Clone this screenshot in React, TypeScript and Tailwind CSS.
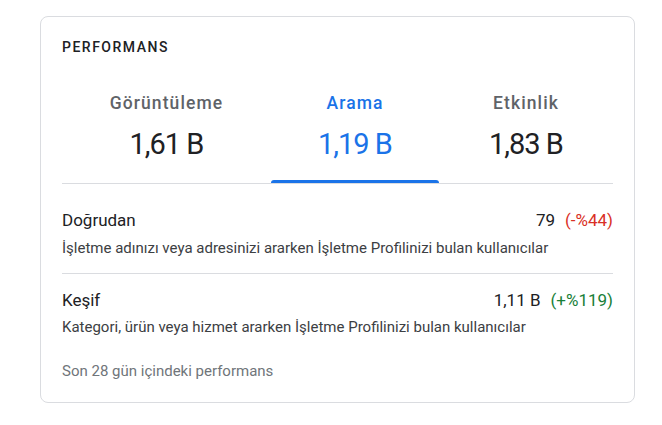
import React from "react";

const font = { fontFamily: "Roboto, 'Noto Sans', Arial, sans-serif" };

function Tab({ label, value, active, className }: { label: string; value: string; active?: boolean; className: string }) {
  return (
    <div className={`relative flex flex-col items-center pb-[21px] ${className}`}>
      <div className={`text-[17.5px] leading-[24px] font-medium tracking-[1.1px] ${active ? "text-[#1a73e8]" : "text-[#5f6368]"}`}>{label}</div>
      <div className={`mt-[11px] text-[29px] leading-[36px] tracking-[-1px] ${active ? "text-[#1a73e8]" : "text-[#202124]"}`}>{value}</div>
      {active && <div className="absolute bottom-0 left-0 right-0 h-[3px] rounded-t-[3px] bg-[#1a73e8]" />}
    </div>
  );
}

export default function App() {
  return (
    <div className="w-[662px] h-[425px] bg-white pt-4 pl-10" style={font}>
      <div className="w-[595px] h-[387px] border border-[#dadce0] rounded-lg px-[21px] pt-[20px]">
        <div className="text-[14px] leading-[20px] font-medium tracking-[1.5px] text-[#202124]">PERFORMANS</div>
        <div className="mt-[34px] flex border-b border-[#dadce0]">
          <Tab label="Görüntüleme" value="1,61 B" className="w-[209px]" />
          <Tab label="Arama" value="1,19 B" active className="w-[168px]" />
          <Tab label="Etkinlik" value="1,83 B" className="flex-1" />
        </div>
        <div className="pt-[24px] pb-[15px] border-b border-[#dadce0]">
          <div className="flex justify-between text-[17px] leading-[24px]">
            <span className="text-[#202124]">Doğrudan</span>
            <span className="text-[#202124]">79<span className="ml-[10px] text-[#d93025]">(-%44)</span></span>
          </div>
          <div className="mt-[6px] text-[15px] leading-[20px] text-[#3c4043]">İşletme adınızı veya adresinizi ararken İşletme Profilinizi bulan kullanıcılar</div>
        </div>
        <div className="pt-[14px]">
          <div className="flex justify-between text-[17px] leading-[24px]">
            <span className="text-[#202124]">Keşif</span>
            <span className="text-[#202124]">1,11 B<span className="ml-[10px] text-[#188038]">(+%119)</span></span>
          </div>
          <div className="mt-[5px] text-[15px] leading-[20px] text-[#3c4043]">Kategori, ürün veya hizmet ararken İşletme Profilinizi bulan kullanıcılar</div>
        </div>
        <div className="mt-[24px] text-[15px] leading-[20px] text-[#70757a]">Son 28 gün içindeki performans</div>
      </div>
    </div>
  );
}
